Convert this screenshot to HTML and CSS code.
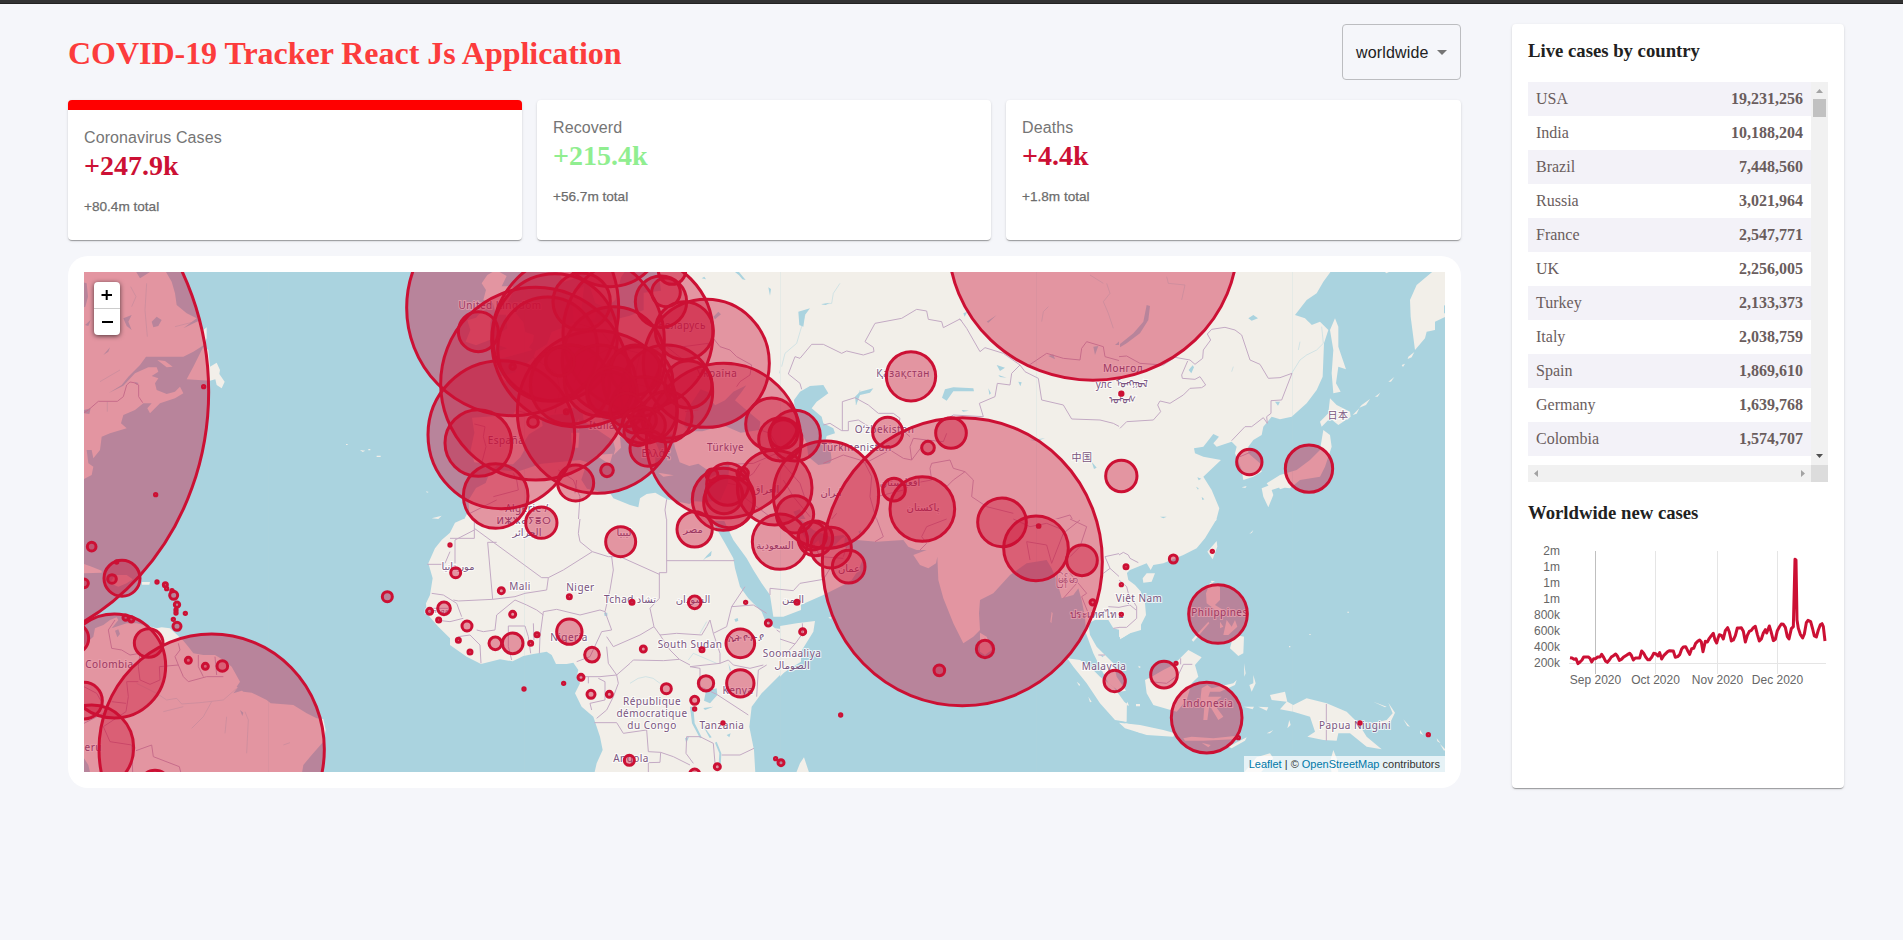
FILE: index.html
```html
<!DOCTYPE html>
<html lang="en">
<head>
<meta charset="utf-8">
<title>COVID-19 Tracker</title>
<link rel="stylesheet" href="styles.css">
</head>
<body>
<div class="topbar"></div>
<div class="app">
  <main class="app-left">
    <header class="header">
      <h1 class="title">COVID-19 Tracker React Js Application</h1>
      <div class="select"><span class="select-text">worldwide</span><span class="caret"></span></div>
    </header>
    <section class="stats">
      <article class="card stat stat-selected"><p class="stat-title">Coronavirus Cases</p><h2 class="stat-value">+247.9k</h2><p class="stat-total">+80.4m total</p></article>
      <article class="card stat"><p class="stat-title">Recoverd</p><h2 class="stat-value stat-green">+215.4k</h2><p class="stat-total">+56.7m total</p></article>
      <article class="card stat"><p class="stat-title">Deaths</p><h2 class="stat-value">+4.4k</h2><p class="stat-total">+1.8m total</p></article>
    </section>
    <section class="map-card">
      <div class="map">
        <svg class="map-svg" viewBox="84 272 1361 500" width="1361" height="500">
          <!-- land, lakes and borders, one group per map sheet -->
          <g transform="translate(60 250) scale(.33333)">
            <path class="land" d="M66 60H225L240 85 270 66H318L335 95 345 130 350 165 380 190 410 205 370 235 415 213 430 240 440 232 440 265 432 285 400 305 370 320H258L240 345 205 380 185 405 145 430 190 407 225 370 265 352 290 352 295 365 275 378 295 385 285 400 290 420 320 432 345 425 360 410 370 430 345 445 300 460 270 490 262 475 275 460 250 460 225 480 190 495 183 520 200 535 150 550 125 560 120 600 100 625 95 600 80 600 85 640 100 650 95 675 66 690Z"/>
            <path class="land" d="M430 290L445 300 450 350 470 338 480 360 478 372 494 395 485 415 470 405 466 388 450 392 380 388 400 350 415 320ZM292 330L315 333 338 350 320 352ZM900 600l16 2-8 4zM950 617h12v4h-12zM925 597h6v4h-6zM858 582h5v3h-5z"/>
            <path class="water" d="M66 95L80 100 84 140 76 170 66 175ZM275 215L290 200 305 210 295 228 280 232ZM190 205L215 195 205 215 215 240 200 228ZM130 315L150 292 145 305ZM75 225L92 210 85 228ZM72 480L92 475 88 492 72 490ZM222 395l14 4-6 5z"/>
            <path class="river" d="M212 110L228 140 215 170M260 100L255 180 262 260M345 230L412 213M120 395L180 360M142 455V485"/>
            <path class="border" d="M72 488L85 480 115 454H172L190 440 200 405 210 396 222 398 236 405V440L248 458"/>
          </g>
          <g transform="translate(60 520) scale(.33333)">
            <path class="land" d="M66 130L95 140 125 152V158L66 160ZM165 165H200L218 178 200 190 175 200 150 190ZM246 186H270L268 194H246Z"/>
            <path class="land" d="M66 380L100 350 105 325 130 315 150 300 170 292 175 300 155 325 175 318 200 310H230L290 325 305 322 330 325 355 348 370 362 385 380 400 400 430 405 465 405 490 420 515 440 540 485 530 500 550 515 575 518 620 540 632 550 700 555 740 580 770 595 790 597 797 630 790 665 755 705 730 735 725 765H92L85 735 66 705Z"/>
            <path class="water" d="M165 332L175 328 180 342 172 352ZM540 570L550 578 547 588ZM535 500L552 498 545 512 520 520Z"/>
            <path class="river" d="M230 490L290 520 320 540 350 535 365 552 420 548 490 540 530 505M310 575L370 560M395 625L430 590 455 545M555 575L565 600 560 700M670 675L690 668M500 590L495 640"/>
            <path class="border" d="M165 300L145 330 155 385 185 390 210 405 240 400M240 400L235 440 240 480 270 493 300 480 298 440 355 435M355 435L345 410 360 390 355 370M355 435L370 470 385 485 440 470 490 470M415 405L415 440 430 470M465 410L470 465M200 485H235M200 485L205 530 198 575 130 620 150 665 215 675 218 756M155 545L198 550M72 500L110 520 130 555M228 692L275 675 280 710 358 740 362 756M72 610L130 580"/>
          </g>
          <g transform="translate(400 250) scale(.33333)">
            <path class="land" d="M216 503L339 494 347 480 354 431 330 399 293 381 346 366 344 337 373 346 400 323 407 303 441 283 455 246 492 231 521 217 513 128 552 109 544 189 561 217 612 217 689 197 731 180V128L783 122 774 57H1203V813H190L207 780 206 750 228 714 257 699 271 662 279 658 264 641 223 637 212 600 223 548Z"/>
            <path class="land" d="M288 60L320 78 305 109 339 109 335 134 322 159 339 165 347 189 370 217 376 246 402 255 399 275 387 292 397 300 373 307 313 323 279 326 296 303 322 295 288 283 296 252 322 235 318 194 288 194 279 159 250 150 258 120 245 100 262 75ZM271 269V217L277 200 248 180 228 203 202 211 211 240 197 275 228 286ZM586 159L617 174 646 150 663 82 680 57H551ZM467 57L492 96 518 87 552 57ZM565 190L590 185 585 210 568 208Z"/>
            <path class="water" d="M279 658L296 643H339L361 622 373 600 368 582 387 553 428 528 424 503 458 494 492 492 523 471 547 484 552 515 583 533 612 553 639 571 646 597 641 615 663 593 660 560 687 571 646 537 612 512 586 480 583 446 607 441 612 459 646 491 697 526 704 560 731 604 748 637 766 648V615L783 615 762 564 783 560 817 553 825 593 839 637 868 648 895 641 919 658 953 652 988 643 984 699 962 750 919 756 885 754 868 762 800 748 766 728 740 732 720 745 715 772 690 765 640 745 632 732 561 716 544 689 561 637 540 630 424 641 356 664 284 660Z"/>
            <path class="water" d="M851 526L861 480 902 418 936 431 931 446 945 466 975 451 1000 425 1039 406 1022 430 1005 451 1039 480 1081 515 1078 540 1022 548 970 526 907 544H868ZM1206 432L1185 440 1176 458 1190 490 1206 520ZM905 85l8-5 5 8zM1005 66l12 10 10 12 10 2-10-12-10-12zM1105 112l8 5-3 20zM940 200l15-15 8 8-18 15zM1165 148l14 8z"/>
            <path class="land" d="M586 615L638 611 629 643ZM513 548H538L535 593H516ZM538 505L536 540 520 530ZM775 668L821 676 790 680ZM925 685L960 668 945 690ZM78 724l8 2-5 2zM95 805l30-8-10 10z"/>
            <path class="river" d="M1165 280L1150 330 1138 370M1160 270V300"/>
            <path class="border" d="M223 522L255 530 250 560 258 590 245 640M347 480L424 503M400 323L470 370 480 420 465 490M521 217L600 240 640 290 560 330 520 400M640 290L720 310 800 290 850 330M720 310L700 400 780 420M805 290L850 290 925 280 920 300M940 265L960 290 990 300 1010 320 1055 345 1050 375 1020 395 1010 410M1203 320L1183 318 1165 360 1203 398M860 545L850 560M895 480L855 485M1081 540L1110 550 1140 600 1190 620M988 643L1060 640 1130 610 1140 640 1203 700M984 700L1010 705 1060 670 1080 640M1010 705L1030 740 1110 800M280 740L355 720 350 690 340 670M475 660L520 690 540 740 535 813M530 690L525 730M800 748L795 780 800 813M210 790L290 750"/>
          </g>
          <g transform="translate(400 520) scale(.33333)">
            <path class="land" d="M190 -3L165 8 150 38 125 60 105 85 85 130 98 175 90 225 78 250 80 280 115 320 150 355 150 375 200 410 243 432 300 418 338 424 370 408 400 402 440 395 455 405 468 432H500L520 428 535 450 530 470 540 490 525 520 545 560 580 590 600 650 608 690 590 730 583 760H1066L1062 690 1048 620 1055 560 1085 520 1140 465 1203 425V318L1150 328 1125 325 1095 300 1085 275 1045 235 1020 200 1005 145 1000 115 975 70 955 35 940 10V-3ZM970 -3L1000 60 1040 115 1060 150 1085 190 1110 225 1120 290H1150L1203 270V-3Z"/>
            <path class="water" d="M918 512L950 505 952 525 930 550 912 542ZM870 560L876 610 900 655 905 652 884 610 880 560ZM945 668L958 700 955 750 962 740 964 700 950 665ZM1003 298l10-4 2 8-8 4zM985 430l8 20-3 5zM855 655l12-5-8 20zM908 122l12-15 15-15-2 15-16 8zM905 610l30 42-6 2zM612 278h10v10h-8zM940 560l-25 10-5-6zM980 645l12-5-4 12z"/>
            <path class="river" d="M690 490Q740 450 780 490M865 420L880 400 950 430M920 305L900 340"/>
            <path class="border" d="M150 55H223V-3M223 25L425 173 445 173 490 150 577 95 540 65 535 40 540 -3M223 30L165 60V130M82 133H125M150 95L135 130M263 67H290M263 67L278 238 175 243 160 240M95 220L130 225 170 250 185 290M100 265H150M105 300L150 305 190 295M278 238L345 230 375 220 440 210 445 173M285 330L290 285 345 240 380 255 410 270 430 285M430 275L470 268 540 285 600 270 615 275M615 275L635 330 605 335 570 410 530 425M430 275L420 350 418 400M375 318H325V380L335 420M375 318L385 350 392 400M400 310L402 360M230 330L250 335 285 330M175 350L210 345 240 375 243 430M635 110L640 150 630 210 615 275M577 95L625 110 660 110 778 163M660 110L625 100M800 -3V158H778V235L750 265 762 320M800 122H1003M762 320L720 345 640 380 620 350M762 320L780 345 830 340 905 345 920 320 930 300 940 340M780 345L810 390 838 418 870 435M620 380L625 430 650 465 690 430 700 420 790 422 838 418M540 470H600L650 465 655 490 640 530 620 570 590 595M565 470V490M595 475L615 485 615 540 570 550 575 570M583 608H650L670 640 740 630 745 695 782 697 780 727 745 728V760M782 697L820 710 870 735M860 650L858 700 880 730M860 650L900 650 940 670 945 730M940 340L980 320 995 260 1035 200M995 260L1060 255 1100 280M940 340L960 400 960 430 870 440 900 445 900 500 950 523M960 430L985 420 1000 435 1050 445 1090 435M1130 330L1190 370 1203 372M1070 530L1075 450 1100 435M950 523L1045 585M965 705L1020 705 1062 685M1110 225V205L1160 210 1203 190"/>
          </g>
          <g transform="translate(780 250) scale(.33333)">
            <path class="land" d="M0 57H1083V813H0V520L25 560 45 585 60 620 55 570 30 500 0 450Z"/>
            <path class="water" d="M42 450L60 425 90 408 130 405 145 430 110 455 95 475 125 500 130 520 160 535 165 550 140 558 135 575 150 590 155 630 150 640 115 645 85 620 80 580 60 540 45 490ZM486 443L495 418 520 412 580 415 582 424 520 424 500 452ZM55 185L90 175 75 195 70 230 58 225ZM225 440L240 425 280 415 270 428 240 435 228 465ZM625 415l8 15-5 4zM650 345l25 8-15 10zM655 375l25 8-20-2zM550 190l12-5-8 15zM545 480l22 2-18 3zM750 570l45-5-25 8zM935 635l15 18-8 4zM40 785L60 778 80 813H55ZM125 163l24-5-12 7zM715 395l10 2-4 12zM710 523l12 4zM475 225l10 15z"/>
            <path class="water" d="M1005 285L1045 250 1083 215V238L1060 270 1030 285ZM940 290L955 288 945 315ZM805 318l15-5 5 15zM620 215L650 195 625 218Z"/>
            <path class="river" d="M180 100L160 130 155 160 125 163M75 195L50 280 15 310 5 350M785 215L790 185 805 170M980 100L990 130 970 155 985 190 1000 235M930 75L970 100M228 465L240 420"/>
            <path class="border" d="M65 418L60 400 25 372 45 320 60 325 95 283 130 283 185 310 200 303 250 315 282 305 280 292 255 275 285 220 365 205 410 178 440 183 445 208 485 215 490 233 540 207 560 235 600 305 615 293 670 310 720 345 695 370 690 405 652 400 645 440 598 460 610 500 520 495 480 520M538 207L545 212M720 345L735 365 775 385 785 450 850 465 875 507 960 510 1000 520 1024 533 1045 520 1083 513M748 345L800 310 850 325 900 330 905 295 920 275 970 290 975 320 1083 350M130 525L150 520 185 542H205V515L235 510 290 545M187 542V455L225 443 265 465 295 490H340L360 505 355 530 390 560M130 640L190 615 240 630 255 640M255 640L275 680 270 740 290 813M255 640L330 600 370 625 395 630 440 570 400 565 390 590 395 630M440 570L490 575 500 550M450 655L455 640 510 630 520 655 555 665 580 690 575 740 620 770 700 790M450 655L455 690 400 700 370 720 290 740M555 665L520 690 500 710M150 813L170 790M-10 620L60 700 80 760M10 690L40 740 90 800M820 810L870 795 880 813M800 700"/>
          </g>
          <g transform="translate(780 520) scale(.33333)">
            <path class="land" d="M0 -3H40L60 30 80 60 100 75 115 60 122 80 160 80 185 55 195 50 192 80 220 90 250 115 235 150 215 180 190 195 130 225 50 260 0 275ZM60 -3L100 30 150 50 190 45 205 58 290 65 370 60 385 80 410 90 440 90 400 105 420 135 445 145 468 130 472 110 475 180 490 235 520 310 550 370 580 350 600 330 597 280 600 240 640 220 690 165 740 130 800 120 815 145 830 180 845 235 880 225 895 205 905 240 915 290 918 340 940 400 960 440 985 490 1020 515 1038 512 1010 470 1000 430 975 405 950 380 930 345 925 310 945 300 985 300 1000 325 1020 330V358L1050 340 1083 330V215L1065 195 1045 180 1040 155 1055 140 1083 130V-3Z"/>
            <path class="land" d="M0 318L50 310 105 303 100 335 60 400 20 450 0 470ZM600 338L620 350 635 390 615 405 600 395ZM862 415L900 420 930 440 960 470 1000 500 1040 555 1038 605 1005 600 960 550 920 490 880 440ZM1036 610L1083 620V640L1040 622ZM72 712L88 760H48L60 730ZM145 292h10l-4 5zM815 275l3 5-4 30-3-5zM832 380l4 8zM890 485l10 8-2 6zM925 530l10 15-5 2zM1042 545l5 12-8-2zM1068 555h12v4h-12zM985 540l6 4z"/>
            <path class="water" d="M235 35l8-5-3 12zM538 118l6 3zM565 228l8 3zM960 405l12 2-4 5z"/>
            <path class="border" d="M0 208L40 212 60 190 130 178 160 130M190 110L200 80M285 65L310 50 290 -3M420 90L440 70 425 50 440 20 500 -3M700 -3L750 20 800 10 850 30M740 65L750 120M740 65L800 75 815 130 850 40 900 0M870 -3L920 20 900 80 870 110M870 160L920 220 905 230 925 280M975 110L1030 98 1045 110 1083 128M975 110L990 145 970 160M990 145L1040 190 1070 240M985 260L1060 265 1070 280V315L1000 325M850 235L890 190M0 357L45 372 68 340 67 310M45 372L10 410M100 70L120 110 190 115M955 405h20"/>
          </g>
          <g transform="translate(1120 250) scale(.33333)">
            <path class="land" d="M-3 57H638L610 95 590 130 560 150 525 195 555 205 575 225 600 215 625 240 612 280 608 380 590 420 560 460 515 500 480 508 455 500 430 530 425 555 400 570 385 590V610L420 640 425 665 400 680 370 690 365 660 345 610 350 590 335 575 290 590 280 580 297 560 280 552 250 590 222 595 225 610 250 620 303 630 250 680 275 720 298 775 288 813H-3Z"/>
            <path class="land" d="M645 205L655 230 655 290 678 358 655 350 648 400 662 425 640 430 635 370 640 300 630 240ZM630 445L650 465 690 485 692 500 655 525 630 505 605 530 600 515 625 490ZM610 540L630 555 635 590 615 650 600 680 540 690 510 715 480 712 455 720 440 700 480 675 530 660 570 630 600 600ZM425 715L450 705 460 735 445 772 430 740ZM470 700L505 692 510 708 480 718ZM940 63L890 105 870 150 872 200 885 300 915 265 920 245 945 240V215L978 200V57ZM865 320l18-14-8 16-12 5zM845 345l10-4-6 10zM805 395l18-14-10 14zM765 440l16-12-8 12zM725 465l25-18-12 18-20 8zM698 495l20-20-8 16zM365 712l15-4-4 6zM565 215l10 10-15 2zM795 66h12l-8 4z"/>
            <path class="water" d="M385 205L400 195 414 205 395 212ZM0 282L40 250 70 215 80 165 90 168 85 210 60 250 20 280 0 292ZM206 360l12-14 4 6-8 18zM465 455h15l-6 12zM228 710l8 5-2 4zM120 800h20l-10 5zM190 785l5 22zM972 165l6 5v20h-6zM245 740l8 8-6 2zM232 682l12 4-8 5z"/>
            <path class="river" d="M515 370L540 330 560 315 590 300 610 280 605 230M335 365L340 350M140 80L145 100 195 105 185 150M540 275L535 300"/>
            <path class="border" d="M-3 320L20 318 60 340 130 345 165 322 210 330 225 343 248 325 250 300 272 270 262 252 275 238 315 232 345 240 365 255 390 330 420 343 445 385 480 383 516 370 485 450 453 452V490L440 500 442 520 430 503 395 530 375 530 335 572M203 333L185 375 187 385 225 388 240 380 257 405 245 413 210 415 190 435 150 460 120 453 113 465 122 485 100 510 20 515 0 535M360 620L395 605"/>
          </g>
          <g transform="translate(1120 520) scale(.33333)">
            <path class="land" d="M-3 -3H290L255 55 230 85 190 105 130 130 100 135 92 150 80 130 30 150 15 165 20 185 45 210 75 250 78 285 60 320 5 355 -3 350ZM68 175L80 160 105 160 95 185 70 188ZM290 63L292 80 278 118 262 95ZM270 188L300 200V240L285 255 310 270 300 280 280 265 260 250 258 220ZM350 345L372 350 370 400 355 408 330 385 335 365ZM215 360L265 305 268 310 220 365ZM300 305L310 320 300 325ZM320 300L335 320 345 300 352 320 325 345 310 345ZM75 480L95 470 130 450 160 435 205 390 245 412 225 435 235 470 215 490 200 540 170 575 100 555 80 520Z"/>
            <path class="land" d="M245 505L262 495 275 505 340 490 350 480 345 495 300 515 270 515 265 530 305 530 280 550 310 590 295 600 268 555 262 600H250L253 560 240 550ZM-3 540L20 550V605L-3 600ZM-3 608L60 615 130 630 165 640 160 650 80 645 15 625ZM190 655L215 650 280 655 345 648 340 658 250 662 195 662ZM245 668L272 675 265 682ZM325 680L380 652 375 662 335 685ZM450 525L495 515 502 545 520 555 560 535 620 550 680 575 715 610 740 650 785 688 740 680 690 640 655 640 650 662 610 660 562 650 585 635 570 590 520 575 480 568 500 545 455 540ZM745 612L800 600 818 580 805 548 825 578 812 605 780 618ZM400 465L407 490 395 515 388 495 400 490ZM370 560H402L398 568ZM415 560L445 562 440 572ZM508 600L512 615 502 625ZM850 598L870 620 862 618ZM900 630L910 645 900 640ZM950 655L962 670 952 664ZM960 672L978 690 972 692ZM640 690L652 720 655 760H635L630 725ZM370 760L410 712 450 700 460 715 420 760ZM440 640L460 630 450 640ZM48 552h12v6h-12zM55 437l8 4-6 3zM372 430l5 30-4 10zM273 182l12 2-10 6zM388 42l12-12-4 8zM760 545l40 15-5 2zM695 245l6-4zM682 275h5v3h-5zM568 342h4v3h-4zM507 378h4v4h-4zM470 535h20l-10 5z"/>
            <path class="border" d="M-3 105L10 97 25 105 30 115 55 128M-3 180L20 200 25 220 50 260V295L20 322H-3M-3 262L30 255 48 270M90 485L140 490 175 465 190 433H217M619 552V662M182 415v18"/>
          </g>
          <path class="seam" d="M268.5 272V772M524.5 272V772M780.5 272V772M1036.5 272V772M1292.5 272V772"/>

          <g class="labels">
            <text x="500" y="309">United Kingdom</text><text x="506" y="444">España</text><text x="602" y="429">Italia</text>
            <text x="682" y="329">Беларусь</text><text x="717" y="377">Україна</text><text x="725.500" y="451">Türkiye</text>
            <text x="656" y="457">Ελλάς</text><text x="527" y="512">Algérie /</text><text x="524" y="524">ⵍⵣⵣⴰⵢⴻⵔ</text><text x="527" y="536">الجزائر</text>
            <text x="624" y="536">ليبيا</text><text x="693" y="533">مصر</text><text x="766" y="493">العراق</text><text x="775" y="549">السعودية</text>
            <text x="458" y="570">موريتانيا</text><text x="520" y="590">Mali</text><text x="580.500" y="591">Niger</text><text x="630" y="603">Tchad تشاد</text>
            <text x="693" y="603">السودان</text><text x="569" y="641">Nigeria</text><text x="690" y="648">South Sudan</text><text x="746" y="641">ኢትዮጵያ</text>
            <text x="792" y="657">Soomaaliya</text><text x="792" y="669">الصومال</text><text x="738" y="694">Kenya</text><text x="793" y="603">اليمن</text>
            <text x="652" y="705">République</text><text x="652" y="716.500">démocratique</text><text x="652" y="728.500">du Congo</text>
            <text x="722" y="729">Tanzania</text><text x="631" y="762">Angola</text><text x="438" y="613" class="tiny">Senegal</text>
            <text x="903" y="377">Қазақстан</text><text x="884.500" y="433">Oʻzbekiston</text><text x="856.500" y="451">Türkmenistan</text>
            <text x="831" y="496">ایران</text><text x="900" y="486">افغانستان</text><text x="923" y="511">پاکستان</text><text x="849" y="572">عمان</text>
            <text x="1123" y="372">Монгол</text><text x="1104" y="388">улс</text><text x="1132" y="387">ᠮᠣᠩᠭᠣᠯ</text><text x="1122" y="403">ᠤᠯᠤᠰ</text>
            <text x="1082" y="461">中国</text><text x="1338" y="419">日本</text><text x="1067" y="583">မြန်မာ</text><text x="1097" y="618">ประเทศไทย</text>
            <text x="1139" y="602">Việt Nam</text><text x="1104" y="670">Malaysia</text><text x="1219.500" y="616">Philippines</text><text x="1208" y="707">Indonesia</text>
            <text x="1355" y="729">Papua Niugini</text><text x="109.500" y="668">Colombia</text><text x="90" y="751">Perú</text>
          </g>

          <!-- case markers -->
          <g class="case" transform="translate(60 250) scale(.33333)">
            <ellipse cx="-262" cy="425" rx="708" ry="782"/><circle cx="431" cy="410" r="3.500"/><circle cx="287" cy="734" r="3.500"/>
          </g>
          <g class="case" transform="translate(60 520) scale(.33333)">
            <ellipse cx="455" cy="688" rx="338" ry="346"/><ellipse cx="163" cy="438" rx="154" ry="156"/><ellipse cx="95" cy="683" rx="126" ry="128"/>
            <circle cx="72" cy="542" r="55"/><circle cx="40" cy="355" r="46"/><circle cx="285" cy="797" r="46"/><circle cx="266" cy="369" r="43"/><circle cx="186" cy="175" r="54"/>
            <circle cx="95" cy="80" r="13"/><circle cx="156" cy="177" r="13"/><circle cx="72" cy="190" r="13"/><circle cx="982" cy="230" r="15"/><circle cx="341" cy="226" r="12"/><circle cx="351" cy="254" r="8"/><circle cx="351" cy="319" r="12"/><circle cx="291" cy="186" r="3.500"/><circle cx="316" cy="194" r="6"/><circle cx="320" cy="206" r="3.500"/><circle cx="336" cy="212" r="3.500"/><circle cx="348" cy="270" r="3.500"/><circle cx="348" cy="279" r="3.500"/><circle cx="376" cy="280" r="3.500"/><circle cx="340" cy="298" r="3.500"/><circle cx="197" cy="293" r="8"/><circle cx="214" cy="298" r="8"/><circle cx="170" cy="126" r="3.500"/><circle cx="385" cy="421" r="9"/><circle cx="436" cy="439" r="9"/><circle cx="487" cy="438" r="16"/>
          </g>
          <g class="case" transform="translate(400 250) scale(.33333)">
            <ellipse cx="338" cy="173" rx="318" ry="324"/><ellipse cx="407" cy="401" rx="285" ry="289"/><ellipse cx="304" cy="554" rx="220" ry="222"/><ellipse cx="592" cy="486" rx="240" ry="244"/><ellipse cx="534" cy="270" rx="259" ry="261"/><ellipse cx="714" cy="250" rx="225" ry="230"/><ellipse cx="465" cy="262" rx="187" ry="191"/><ellipse cx="443" cy="297" rx="150" ry="156"/><ellipse cx="641" cy="330" rx="154" ry="160"/><ellipse cx="919" cy="340" rx="189" ry="192"/><ellipse cx="971" cy="572" rx="232" ry="232"/><ellipse cx="630" cy="-50" rx="160" ry="160"/>
            <ellipse cx="800" cy="425" rx="138" ry="140"/><circle cx="510" cy="404" r="119"/><circle cx="600" cy="392" r="107"/><circle cx="714" cy="395" r="105"/><circle cx="706" cy="360" r="75"/><circle cx="731" cy="480" r="100"/><circle cx="629" cy="430" r="65"/><circle cx="636" cy="428" r="76"/><circle cx="680" cy="480" r="50"/><circle cx="800" cy="500" r="76"/><circle cx="748" cy="526" r="48"/><circle cx="702" cy="515" r="34"/><circle cx="731" cy="510" r="38"/><circle cx="714" cy="545" r="42"/><circle cx="853" cy="242" r="87"/><circle cx="865" cy="403" r="71"/><circle cx="545" cy="155" r="86"/><circle cx="783" cy="155" r="77"/><circle cx="798" cy="127" r="43"/><circle cx="816" cy="62" r="41"/><circle cx="235" cy="245" r="60"/><circle cx="235" cy="579" r="100"/><circle cx="287" cy="738" r="97"/><circle cx="527" cy="699" r="54"/><circle cx="424" cy="818" r="47"/><circle cx="621" cy="661" r="19"/><circle cx="399" cy="516" r="16"/><circle cx="499" cy="485" r="6"/><circle cx="480" cy="335" r="43"/><circle cx="338" cy="350" r="8"/><circle cx="744" cy="595" r="54"/><circle cx="1115" cy="522" r="78"/><circle cx="1141" cy="568" r="65"/><circle cx="1150" cy="552" r="43"/><circle cx="1185" cy="557" r="76"/>
            <circle cx="1124" cy="713" r="112"/><circle cx="970" cy="748" r="93"/><circle cx="987" cy="757" r="76"/><circle cx="983" cy="703" r="63"/><circle cx="972" cy="735" r="56"/><circle cx="936" cy="675" r="18"/><circle cx="1028" cy="670" r="17"/><circle cx="1185" cy="793" r="56"/><circle cx="884" cy="838" r="53"/><circle cx="662" cy="875" r="45"/><circle cx="1140" cy="875" r="83"/>
          </g>
          <g class="case" transform="translate(400 520) scale(.33333)">
            <circle cx="150" cy="75" r="3.500"/><circle cx="167" cy="158" r="15"/><circle cx="304" cy="212" r="9"/><circle cx="132" cy="265" r="19"/><circle cx="89" cy="274" r="9"/><circle cx="116" cy="300" r="6"/><circle cx="201" cy="318" r="15"/><circle cx="175" cy="361" r="6"/><circle cx="210" cy="396" r="6"/><circle cx="286" cy="370" r="19"/><circle cx="338" cy="370" r="31"/><circle cx="338" cy="283" r="9"/><circle cx="411" cy="344" r="6"/><circle cx="392" cy="370" r="6"/><circle cx="508" cy="230" r="6"/><circle cx="508" cy="335" r="38"/><circle cx="576" cy="404" r="22"/><circle cx="543" cy="472" r="9"/><circle cx="491" cy="490" r="3.500"/><circle cx="372" cy="507" r="3.500"/><circle cx="573" cy="523" r="12"/><circle cx="628" cy="523" r="9"/><circle cx="696" cy="247" r="6"/><circle cx="884" cy="247" r="19"/><circle cx="1037" cy="247" r="3.500"/><circle cx="730" cy="387" r="9"/><circle cx="906" cy="389" r="6"/><circle cx="1021" cy="370" r="43"/><circle cx="1021" cy="490" r="41"/><circle cx="918" cy="490" r="23"/><circle cx="884" cy="541" r="12"/><circle cx="884" cy="567" r="3.500"/><circle cx="799" cy="506" r="15"/><circle cx="969" cy="609" r="3.500"/><circle cx="688" cy="721" r="15"/><circle cx="952" cy="740" r="9"/><circle cx="884" cy="762" r="15"/><circle cx="1105" cy="309" r="9"/><circle cx="1143" cy="728" r="9"/><circle cx="1127" cy="716" r="3.500"/>
          </g>
          <g class="case" transform="translate(780 250) scale(.33333)">
            <ellipse cx="939" cy="-20" rx="433" ry="411"/><ellipse cx="547" cy="935" rx="420" ry="432"/><ellipse cx="138" cy="734" rx="158" ry="161"/><circle cx="427" cy="777" r="97"/><circle cx="342" cy="719" r="34"/><circle cx="323" cy="547" r="45"/><circle cx="444" cy="593" r="19"/><circle cx="513" cy="549" r="46"/><circle cx="393" cy="379" r="74"/><circle cx="1024" cy="431" r="5"/><circle cx="1024" cy="678" r="47"/><circle cx="666" cy="817" r="73"/>
          </g>
          <g class="case" transform="translate(780 520) scale(.33333)">
            <circle cx="768" cy="85" r="97"/><circle cx="106" cy="55" r="52"/><circle cx="97" cy="48" r="42"/><circle cx="153" cy="83" r="61"/><circle cx="206" cy="140" r="49"/><circle cx="776" cy="18" r="4"/><circle cx="906" cy="121" r="46"/><circle cx="1038" cy="140" r="6"/><circle cx="1024" cy="194" r="3.500"/><circle cx="1024" cy="283" r="3.500"/><circle cx="938" cy="247" r="8"/><circle cx="1004" cy="483" r="32"/><circle cx="615" cy="387" r="26"/><circle cx="478" cy="451" r="16"/><circle cx="182" cy="585" r="3.500"/><circle cx="51" cy="247" r="6"/><circle cx="68" cy="335" r="9"/>
          </g>
          <g class="case" transform="translate(1120 250) scale(.33333)"><circle cx="388" cy="636" r="38"/><circle cx="567" cy="656" r="71"/></g>
          <g class="case" transform="translate(1120 520) scale(.33333)">
            <circle cx="160" cy="117" r="12"/><circle cx="277" cy="94" r="3.500"/><circle cx="294" cy="282" r="88"/><circle cx="132" cy="464" r="40"/><circle cx="168" cy="430" r="3.500"/><circle cx="260" cy="593" r="106"/><circle cx="355" cy="653" r="3.500"/><circle cx="720" cy="609" r="3.500"/><circle cx="925" cy="644" r="3.500"/>
          </g>
        </svg>
        <div class="zoom">
          <svg class="zoom-btn" viewBox="0 0 26 26"><path d="M7.500 13H18M12.700 8V18"/></svg>
          <svg class="zoom-btn" viewBox="0 0 26 26"><path d="M8 13H19"/></svg>
        </div>
        <div class="attribution"><a>Leaflet</a> | © <a>OpenStreetMap</a> contributors</div>
      </div>
    </section>
  </main>

  <aside class="card sidebar">
    <h3 class="side-title">Live cases by country</h3>
    <div class="table-box">
      <div class="rows">
        <div class="row"><span>USA</span><b>19,231,256</b></div>
        <div class="row"><span>India</span><b>10,188,204</b></div>
        <div class="row"><span>Brazil</span><b>7,448,560</b></div>
        <div class="row"><span>Russia</span><b>3,021,964</b></div>
        <div class="row"><span>France</span><b>2,547,771</b></div>
        <div class="row"><span>UK</span><b>2,256,005</b></div>
        <div class="row"><span>Turkey</span><b>2,133,373</b></div>
        <div class="row"><span>Italy</span><b>2,038,759</b></div>
        <div class="row"><span>Spain</span><b>1,869,610</b></div>
        <div class="row"><span>Germany</span><b>1,639,768</b></div>
        <div class="row"><span>Colombia</span><b>1,574,707</b></div>
      </div>
      <svg class="vbar" viewBox="0 0 17 383"><rect x="2" y="17" width="13" height="18" fill="#c1c1c1"/><path d="M5 11h7L8.500 7z" fill="#a3a3a3"/><path d="M5 372h7l-3.500 4z" fill="#505050"/></svg>
      <svg class="hbar" viewBox="0 0 283 17"><path d="M10 5v7L6 8.500zM273 5v7l4-3.500z" fill="#a3a3a3"/></svg>
      <div class="corner"></div>
    </div>
    <h3 class="side-title side-title-2">Worldwide new cases</h3>
    <svg class="chart" viewBox="1528 540 300 150" width="300" height="150">
      <path class="grid-line" d="M1655.500 551V674M1717.500 551V674M1777.500 551V674M1569 663.500H1826"/>
      <path class="grid-zero" d="M1595.500 551V674"/>
      <g class="ylab"><text x="1560" y="555">2m</text><text x="1560" y="571">1m</text><text x="1560" y="587">1m</text><text x="1560" y="603">1m</text><text x="1560" y="619">800k</text><text x="1560" y="635">600k</text><text x="1560" y="651">400k</text><text x="1560" y="667">200k</text></g>
      <g class="xlab"><text x="1595.500" y="684">Sep 2020</text><text x="1655.500" y="684">Oct 2020</text><text x="1717.500" y="684">Nov 2020</text><text x="1777.500" y="684">Dec 2020</text></g>
      <path class="line" transform="translate(1500 440) scale(.33333)" d="M210 653L216 654 222 658 228 656 234 671 240 666 246 660 251 651H265L270 655 275 666 281 656 287 656 293 651 300 651 305 643 311 652 317 664 322 667 328 660 334 651 340 647 347 642 352 648 358 661 364 658 370 652 376 648 382 644 389 640 394 646 400 660 406 654 412 654 419 654 425 633 431 640 437 651 443 659 449 659 455 652 461 640 467 641 474 648 479 638 485 657 491 647 497 641 503 635 509 632 520 633 526 652 533 650 539 644 545 627 550 621 557 620 563 632 569 643 575 626 581 625 587 610 593 604 599 600 604 606 609 635 616 604 622 606 628 595 634 587 640 580 645 600 650 609 654 595 658 584 664 586 670 597 676 572 683 563 688 576 694 603 700 600 706 587 712 564 718 564 724 563 730 574 736 606 742 586 748 574 754 571 760 563 766 559 772 583 778 603 784 597 790 579 796 569 800 579 808 558 813 574 820 602 826 598 832 572 838 561 844 552 850 553 856 562 862 590 867 597 874 566 880 560 883 440 885 358 888 360 891 540 895 565 901 583 908 594 913 582 919 548 924 541 932 545 938 567 943 588 949 591 955 570 961 554 966 551 970 560 975 603"/>
    </svg>
  </aside>
</div>
</body>
</html>
```

FILE: styles.css
```css
* { box-sizing: border-box; margin: 0; }
body { background: #f5f6fa; font-family: "Liberation Serif", serif; overflow: hidden; min-height: 940px; }
.topbar { height: 4px; background: #333; border-bottom: 1px solid #222; }
.app { display: flex; gap: 51px; padding: 20px 59px 0 68px; }
.app-left { width: 1393px; }
.header { display: flex; justify-content: space-between; align-items: center; height: 56px; margin-bottom: 20px; }
.title { font-size: 32px; line-height: 36px; font-weight: bold; letter-spacing: -.03px; color: #fc3c3c; padding-top: 2px; }
.select { width: 119px; height: 56px; border: 1px solid #bcbdc0; border-radius: 4px; padding: 0 13px; display: flex; align-items: center; justify-content: space-between; font: 16px "Liberation Sans", Arial, sans-serif; letter-spacing: .15px; color: #212121; }
.select-text { padding-top: 2px; }
.caret { border: 5px solid transparent; border-top-color: #757575; border-bottom: 0; }
.card { background: #fff; border-radius: 4px; box-shadow: 0 2px 1px -1px rgba(0,0,0,.2), 0 1px 1px rgba(0,0,0,.14), 0 1px 3px rgba(0,0,0,.12); }
.stats { display: grid; grid-template-columns: 454px 454px 455px; gap: 15px; }
.stat { height: 140px; padding: 16px; overflow: hidden; }
.stat-selected { border-top: 10px solid red; }
.stat-title { font: 16px/24px "Liberation Sans", Arial, sans-serif; letter-spacing: .1px; color: #757575; }
.stat-value { font-size: 28px; line-height: 32px; color: #cc1034; font-weight: bold; }
.stat-green { color: #90ee90; }
.stat-total { font: 13.600px/20px "Liberation Sans", Arial, sans-serif; color: #6c6c6c; margin-top: 15px; -webkit-text-stroke: .25px #6c6c6c; }
.map-card { background: #fff; border-radius: 20px; padding: 16px; height: 532px; margin-top: 16px; }
.map { position: relative; height: 500px; background: #aad3df; overflow: hidden; }
.map-svg { display: block; }
.land { fill: #f2efe9; }
.water { fill: #aad3df; }
.river { fill: none; stroke: #aad3df; stroke-width: 2; opacity: .7; }
.border { fill: none; stroke: #c3aac4; stroke-width: 3; stroke-linejoin: round; }
.seam { stroke: #b4d6de; stroke-width: 1; opacity: .2; fill: none; }
.labels { font: 10px "Noto Sans", "DejaVu Sans", "Noto Sans CJK SC", sans-serif; letter-spacing: .45px; fill: #7a5580; stroke: rgba(255,255,255,.75); stroke-width: 2px; paint-order: stroke; text-anchor: middle; }
.tiny { font-size: 6px; }
.case { fill: #cc1034; fill-opacity: .4; stroke: #cc1034; stroke-width: 9; }
.zoom { position: absolute; left: 10px; top: 10px; width: 26px; border-radius: 4px; background: #fff; box-shadow: 0 1px 5px rgba(0,0,0,.65); }
.zoom-btn { display: block; width: 26px; height: 26px; fill: none; stroke: #000; stroke-width: 2; }
.zoom-btn:first-child { height: 27px; border-bottom: 1px solid #ccc; }
.attribution { position: absolute; right: 0; bottom: 0; height: 16px; padding: 0 5px; font: 11px/16px "Liberation Sans", Arial, sans-serif; color: #333; background: rgba(255,255,255,.7); white-space: nowrap; }
.attribution a { color: #0078a8; }
.sidebar { width: 332px; height: 764px; padding: 16px; }
.side-title { font-size: 18.720px; line-height: 22px; color: #212121; margin: 0; }
.table-box { display: grid; grid-template: 383px 17px / 283px 17px; margin-top: 20px; color: #6a5d5d; font-size: 16px; }
.rows { overflow: hidden; }
.row { height: 34px; padding: 0 8px; display: flex; justify-content: space-between; align-items: center; }
.row:nth-child(odd) { background: #f3f2f8; }
.vbar, .hbar { display: block; width: 100%; height: 100%; background: #f1f1f1; }
.corner { background: #dcdcdc; }
.side-title-2 { margin-top: 20px; }
.chart { display: block; margin-top: 16px; font: 12px "Liberation Sans", Arial, sans-serif; fill: #666; }
.grid-line { stroke: #e5e5e5; fill: none; }
.grid-zero { stroke: #bfbfbf; fill: none; }
.ylab { text-anchor: end; }
.xlab { text-anchor: middle; }
.line { fill: none; stroke: #cc1034; stroke-width: 9; stroke-linejoin: round; }
```
